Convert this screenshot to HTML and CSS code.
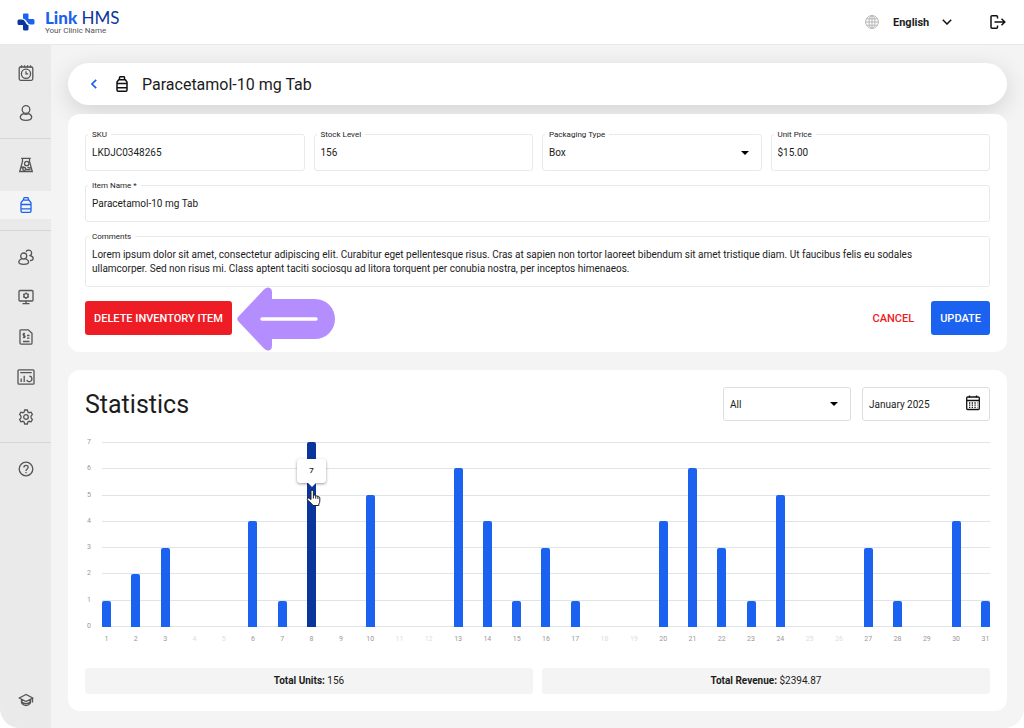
FILE: index.html
```html
<!DOCTYPE html>
<html lang="en">

<head>
    <meta charset="UTF-8">
    <meta name="viewport" content="width=device-width, initial-scale=1.0">
    <title>Link HMS - Inventory Item</title>
    <link rel="stylesheet" href="styles.css">
</head>

<body>
    <div class="app">
        <header class="topbar">
            <a class="logo" href="#">
                <svg width="18" height="18" viewBox="0 0 18 18">
                    <path fill="#1b62f0" d="M6 1.500Q6 .5 7 .5h3.500q1 0 1 1V6H16q1.500 0 1.500 1.500V10q0 1.500-1.500 1.500h-2.500Q11.500 11.500 10.500 9.500L9 7.500Q8 6 6 5.500z"/>
                    <path fill="#0a359c" d="M11.500 16q0 1.500-1.500 1.500H7.500Q6 17.500 6 16v-4H2Q.5 12 .5 10.500V8Q.5 6.500 2 6.500h3q2 0 3 2l1.500 2.500q.8 1 2 1.200z"/>
                </svg>
                <span class="logo-text">
                    <span class="logo-name"><b>Link</b> HMS</span>
                    <span class="clinic">Your Clinic Name</span>
                </span>
            </a>
            <div class="topbar-right">
                <svg width="14" height="14" viewBox="0 0 14 14" fill="none" stroke="#b5b5b5">
                    <circle cx="7" cy="7" r="6.400"/>
                    <ellipse cx="7" cy="7" rx="3" ry="6.400"/>
                    <path d="M7 .6v12.800M.6 7h12.800M1.600 3.800h10.800M1.600 10.200h10.800"/>
                </svg>
                <label class="language">
                    <select aria-label="Language">
                        <option>English</option>
                    </select>
                    <svg width="10" height="6" viewBox="0 0 10 6" fill="none" stroke="#111" stroke-width="1.500">
                        <path d="M.8.8 5 5 9.200.8"/>
                    </svg>
                </label>
                <button class="icon-btn" type="button" aria-label="Log out">
                    <svg width="16" height="14" viewBox="0 0 16 14" fill="none" stroke="#111" stroke-width="1.500">
                        <path d="M7.500 3.500V1.800q0-1-1-1H2q-1 0-1 1v10.400q0 1 1 1h4.500q1 0 1-1v-1.700M4.500 7h10M11.500 3.700 14.800 7l-3.300 3.300"/>
                    </svg>
                </button>
            </div>
        </header>

        <div class="layout">
            <nav class="sidebar">
                <div class="nav-group">
                    <a href="#" aria-label="Appointments">
                        <svg width="16" height="16" viewBox="0 0 16 16">
                            <rect x="1.200" y="2" width="13.600" height="13.300" rx="1.500"/>
                            <circle cx="8" cy="8.700" r="4.600"/>
                            <path d="M8 6.200v2.700h2.200M3.500.3v2.200M6.500.3v2.200M9.500.3v2.200M12.500.3v2.200"/>
                        </svg>
                    </a>
                    <a href="#" aria-label="Patients">
                        <svg width="16" height="16" viewBox="0 0 16 16">
                            <circle cx="8" cy="4.500" r="3.800"/>
                            <path d="M5.500 8.700C3.500 9.500 2.300 10.800 2.300 12.300c0 2 2.500 3 5.700 3s5.700-1 5.700-3c0-1.500-1.200-2.800-3.200-3.600-1.500.8-3.500.8-5 0z"/>
                        </svg>
                    </a>
                </div>
                <div class="nav-group">
                    <a href="#" aria-label="Laboratory">
                        <svg width="16" height="16" viewBox="0 0 16 16">
                            <path d="M3.200 1.300h9.600M4.500 1.300v3.200L1.700 14.500h12.600L11.500 4.500V1.300M3 11c1.500-1.500 2.500-1.200 3.500-.3M9.500 10c1.500 1 2.500 1.300 3.700.5M8 12.500h4.500"/>
                            <circle cx="8.700" cy="6.500" r="2.200"/>
                            <circle cx="6.200" cy="12" r="1.500"/>
                        </svg>
                    </a>
                    <a class="active" href="#" aria-label="Inventory">
                        <svg width="16" height="16" viewBox="0 0 16 16">
                            <path d="M5.700 3.200v-1.700q0-.8.8-.8h3q.8 0 .8.800v1.700M5 3.200h6l2 2.600v8.200q0 1.300-1.300 1.300H4.300Q3 15.300 3 14V5.800zM3 7.500h10M3 11.800h10"/>
                        </svg>
                    </a>
                </div>
                <div class="nav-group">
                    <a href="#" aria-label="Staff">
                        <svg width="16" height="16" viewBox="0 0 16 16">
                            <circle cx="5.700" cy="7" r="3"/>
                            <path d="M3.700 10C2 10.500.8 11.700.8 13c0 1.500 2 2.300 4.900 2.300s4.900-.8 4.900-2.300c0-1.300-1.200-2.500-2.900-3M8 2.600a3 3 0 1 1 4.200 4c1.800.5 3 1.600 3 2.900 0 1.200-1.200 2-3.200 2.200"/>
                        </svg>
                    </a>
                    <a href="#" aria-label="System">
                        <svg width="16" height="16" viewBox="0 0 16 16">
                            <rect x="1" y="1.500" width="14" height="10.500" rx="1"/>
                            <circle cx="8" cy="6.700" r="2.100"/>
                            <path d="M8 12v2.700M4.500 14.700h7M8 3.500v1.200M8 8.800v1.200M5.200 5.100l1 .6M9.800 7.700l1 .6M5.200 8.300l1-.6M9.800 5.700l1-.6"/>
                        </svg>
                    </a>
                    <a href="#" aria-label="Billing">
                        <svg width="16" height="16" viewBox="0 0 16 16">
                            <path d="M3.300.8h7L14 4.300v9.700q0 1.200-1.200 1.200H3.200Q2 15.200 2 14V2Q2 .8 3.300.8zM5 12.500h6.500M9 6.500h2.500M9 9.200h2.500M7 4.800c-2-.8-2.500 1.300-1 1.700 1.700.5 1.200 2.700-1 1.800M6 3.800v5.500"/>
                        </svg>
                    </a>
                    <a href="#" aria-label="Reports">
                        <svg width="18" height="16" viewBox="0 0 18 16">
                            <rect x="1" y=".8" width="16" height="14.400" rx="1"/>
                            <path d="M3.300 3.700h11.400M4.200 13V9.500M7.200 13V6.800M12.300 7.200a2.700 2.700 0 1 1-2.600 3.700"/>
                        </svg>
                    </a>
                    <a href="#" aria-label="Settings">
                        <svg width="16" height="16" viewBox="0 0 16 16">
                            <path d="M6.700 1h2.600l.6 2 1.200.7 2-.5 1.300 2.300L13 7.200v1.600l1.400 1.700-1.300 2.300-2-.5-1.200.7-.6 2H6.700l-.6-2-1.200-.7-2 .5-1.300-2.300L3 8.800V7.200L1.600 5.500l1.300-2.300 2 .5L6.100 3z"/>
                            <circle cx="8" cy="8" r="2.300"/>
                        </svg>
                    </a>
                </div>
                <div class="nav-group">
                    <a href="#" aria-label="Help">
                        <svg width="16" height="16" viewBox="0 0 16 16">
                            <circle cx="8" cy="8" r="6.800"/>
                            <path d="M5.900 6.500c0-2.900 4.300-2.800 4.300-.2C10.200 8 8 8 8 9.900M8 11v1.300"/>
                        </svg>
                    </a>
                </div>
                <div class="nav-group nav-bottom">
                    <a href="#" aria-label="Training">
                        <svg width="16" height="16" viewBox="0 0 16 16">
                            <path d="M8 2.500 1.300 6 8 9.500 14.700 6zM3.500 7.500v3.300c2 3.600 7 3.600 9 0V7.500M14.500 6.200v4.300M3.500 9.300c2 3 7 3 9 0"/>
                        </svg>
                    </a>
                </div>
            </nav>

            <main>
                <div class="title-bar">
                    <a class="back" href="#" aria-label="Back">
                        <svg width="6" height="10" viewBox="0 0 6 10" fill="none" stroke="#1b62f0" stroke-width="1.700">
                            <path d="M5.200.8 1 5l4.200 4.200"/>
                        </svg>
                    </a>
                    <svg width="12" height="16" viewBox="0 0 12 16" fill="none" stroke="#111" stroke-width="1.500">
                        <path d="M3.500 3.500v-2q0-.7.7-.7h3.600q.7 0 .7.700v2M2.700 3.700h6.600L11 6v8q0 1.200-1.200 1.200H2.200Q1 15.200 1 14V6zM1 7.500h10M1 11.700h10"/>
                    </svg>
                    <h1>Paracetamol-10 mg Tab</h1>
                </div>

                <form class="card item-form">
                    <div class="row">
                        <div class="field">
                            <label for="sku">SKU</label>
                            <input type="text" id="sku" value="LKDJC0348265">
                        </div>
                        <div class="field">
                            <label for="stock">Stock Level</label>
                            <input type="text" id="stock" value="156">
                        </div>
                        <div class="field">
                            <label for="packaging">Packaging Type</label>
                            <select id="packaging">
                                <option>Box</option>
                            </select>
                            <span class="caret"></span>
                        </div>
                        <div class="field">
                            <label for="price">Unit Price</label>
                            <input type="text" id="price" value="$15.00">
                        </div>
                    </div>
                    <div class="field">
                        <label for="itemName">Item Name *</label>
                        <input type="text" id="itemName" value="Paracetamol-10 mg Tab">
                    </div>
                    <div class="field">
                        <label for="comments">Comments</label>
                        <textarea id="comments" spellcheck="false">Lorem ipsum dolor sit amet, consectetur adipiscing elit. Curabitur eget pellentesque risus. Cras at sapien non tortor laoreet bibendum sit amet tristique diam. Ut faucibus felis eu sodales
ullamcorper. Sed non risus mi. Class aptent taciti sociosqu ad litora torquent per conubia nostra, per inceptos himenaeos.</textarea>
                    </div>
                    <div class="actions">
                        <div class="delete-wrap">
                            <button class="btn btn-delete" type="button">DELETE INVENTORY ITEM</button>
                            <svg class="pointer" width="98" height="64" viewBox="0 0 98 64">
                                <path fill="#b48eff" d="M1.500 29.500 27 2.500Q30-.5 33 1q2 1 2 4v7h43a20 20 0 0 1 0 40H35v7q0 3-2 4-3 1.500-6-1.500L1.500 34.500q-2.500-2.500 0-5z"/>
                                <path stroke="#fff" stroke-width="3.500" stroke-linecap="round" d="M25 32h54"/>
                            </svg>
                        </div>
                        <div class="actions-right">
                            <button class="btn btn-cancel" type="button">CANCEL</button>
                            <button class="btn btn-update" type="button">UPDATE</button>
                        </div>
                    </div>
                </form>

                <section class="card stats">
                    <div class="stats-head">
                        <h2>Statistics</h2>
                        <div class="filters">
                            <div class="field">
                                <select aria-label="Filter">
                                    <option>All</option>
                                </select>
                                <span class="caret"></span>
                            </div>
                            <div class="field">
                                <input type="text" aria-label="Month" value="January 2025">
                                <svg class="calendar" width="14" height="16" viewBox="0 0 14 16" fill="none" stroke="#111">
                                    <rect x=".7" y="2" width="12.600" height="12.500" rx="1" stroke-width="1.300"/>
                                    <path stroke-width="1.300" d="M3.500.5v2M10.500.5v2M1 5.500h12"/>
                                    <path stroke-width="1.300" stroke-dasharray="1.300 1.400" d="M3 8h8.500M3 10.200h8.500M3 12.400h8.500"/>
                                </svg>
                            </div>
                        </div>
                    </div>

                    <div class="chart">
                        <div class="y-axis" id="yAxis"></div>
                        <div class="plot">
                            <div class="grid-lines" id="gridLines"></div>
                            <div class="bars" id="bars"></div>
                        </div>
                        <div class="x-axis" id="xAxis"></div>
                    </div>

                    <div class="totals">
                        <p><b>Total Units:</b> 156</p>
                        <p><b>Total Revenue:</b> $2394.87</p>
                    </div>
                </section>
            </main>
        </div>
    </div>

    <script src="script.js"></script>
</body>

</html>
```

FILE: styles.css
```css
* {
    box-sizing: border-box;
}

body {
    margin: 0;
    background-color: #fff;
    color: #1c1c1c;
    font-family: Roboto, "Liberation Sans", sans-serif;
    font-size: 10px;
}

h1, h2, p {
    margin: 0;
    font-weight: 400;
}

svg {
    display: block;
    flex-shrink: 0;
}

button, input, select, textarea {
    font: inherit;
    color: inherit;
}

.app {
    display: flex;
    flex-direction: column;
    min-height: 100vh;
    background-color: #f4f4f4;
    border-radius: 20px;
    overflow: hidden;
}

/* top bar */
.topbar {
    display: flex;
    justify-content: space-between;
    align-items: center;
    height: 45px;
    padding: 0 18px 0 17px;
    background-color: #fff;
    border-bottom: 1px solid #e8e8e8;
}

.logo {
    display: flex;
    align-items: center;
    gap: 10px;
    color: #0a359c;
    text-decoration: none;
}

.logo-text {
    display: flex;
    flex-direction: column;
}

.logo-name {
    font-family: Lato, sans-serif;
    font-size: 17px;
    line-height: 18px;
}

.logo-name b {
    color: #1b62f0;
    font-weight: 900;
}

.clinic {
    color: #555;
    font-size: 8px;
    line-height: 8px;
}

.topbar-right {
    display: flex;
    align-items: center;
    gap: 14px;
}

.language {
    display: flex;
    align-items: center;
}

.language select {
    width: 49px;
    padding: 0;
    border: 0;
    background: none;
    appearance: none;
    font-size: 11px;
    font-weight: 700;
}

.icon-btn {
    padding: 0;
    margin-left: 24px;
    border: 0;
    background: none;
}

/* sidebar */
.layout {
    display: flex;
    flex: 1;
}

.sidebar {
    display: flex;
    flex-direction: column;
    width: 51px;
    flex-shrink: 0;
    padding-top: 2px;
    background-color: #eaeaea;
}

.nav-group {
    display: flex;
    flex-direction: column;
    gap: 12px;
    padding: 12px 0 11px;
}

.nav-group + .nav-group {
    border-top: 1px solid #d6d6d6;
}

.nav-group a {
    display: flex;
    justify-content: center;
    align-items: center;
    height: 28px;
}

.nav-group svg {
    fill: none;
    stroke: #555;
    stroke-width: 1.3;
}

.nav-group .active {
    background-color: #f4f4f4;
}

.nav-group .active svg {
    stroke: #1b62f0;
}

.nav-group.nav-bottom {
    margin-top: auto;
    padding-bottom: 14px;
    border-top: 0;
}

/* content */
main {
    display: flex;
    flex-direction: column;
    flex: 1;
    min-width: 0;
    padding: 18px 17px 17px;
}

.title-bar {
    display: flex;
    align-items: center;
    height: 42px;
    margin-bottom: 9px;
    padding: 0 20px;
    background-color: #fff;
    border-radius: 21px;
    box-shadow: 0 6px 24px rgba(0, 0, 0, 0.14);
}

.title-bar h1 {
    margin-left: 14px;
    font-size: 16px;
}

.back {
    padding: 3px;
    margin-right: 16px;
}

.card {
    position: relative;
    padding: 17px;
    background-color: #fff;
    border-radius: 12px;
}

.item-form {
    display: flex;
    flex-direction: column;
    gap: 14px;
    margin-bottom: 18px;
    padding-top: 20px;
}

.row {
    display: grid;
    grid-template-columns: repeat(4, 1fr);
    gap: 9px;
}

.field {
    position: relative;
}

.field label {
    position: absolute;
    top: -4px;
    left: 3px;
    padding: 0 4px;
    background-color: #fff;
    font-size: 8px;
    line-height: 10px;
}

.field input,
.field select,
.field textarea {
    display: block;
    width: 100%;
    height: 37px;
    padding: 0 6px;
    border: 1px solid #e9e9e9;
    border-radius: 3px;
    background-color: #fff;
    appearance: none;
}

.field textarea {
    height: 51px;
    padding: 11px 6px;
    line-height: 14px;
    resize: none;
}

.caret {
    position: absolute;
    top: calc(50% - 2px);
    right: 13px;
    border: 4px solid transparent;
    border-top-color: #000;
    border-bottom: 0;
}

.actions,
.actions-right {
    display: flex;
    justify-content: space-between;
}

.actions-right {
    gap: 8px;
}

.delete-wrap {
    position: relative;
}

.btn {
    height: 34px;
    padding: 0 9px;
    border: 0;
    border-radius: 3px;
    color: #fff;
    font-size: 11px;
    font-weight: 500;
}

.btn-delete {
    background-color: #ee1c25;
}

.btn-cancel {
    background-color: #fff;
    color: #ee1c25;
}

.btn-update {
    background-color: #1b62f0;
}

.pointer {
    position: absolute;
    top: -14px;
    left: calc(100% + 5px);
}

/* statistics */
.stats-head {
    display: flex;
    justify-content: space-between;
    align-items: center;
}

.stats-head h2 {
    font-size: 25px;
}

.filters {
    display: flex;
    gap: 11px;
}

.filters .field {
    width: 128px;
}

.filters .field input,
.filters .field select {
    height: 34px;
    border-color: #dedede;
}

.calendar {
    position: absolute;
    top: 8px;
    right: 10px;
}

.chart {
    display: grid;
    grid-template-columns: 17px 1fr;
    row-gap: 7px;
    margin-top: 21px;
    color: #999;
    font-size: 7px;
}

.y-axis,
.grid-lines {
    display: flex;
    flex-direction: column;
    justify-content: space-between;
}

.y-axis span {
    height: 1px;
    padding-left: 2px;
    line-height: 1px;
}

.plot {
    display: grid;
    height: 185px;
}

.grid-lines,
.bars {
    grid-area: 1 / 1;
}

.grid-lines span {
    height: 1px;
    background-color: #dfe4e8;
}

.bars,
.x-axis {
    display: flex;
    justify-content: space-between;
    align-items: flex-end;
}

.bar {
    position: relative;
    width: 9px;
    border-radius: 2px 2px 0 0;
    background-color: #1b62f0;
}

.bar.hovered {
    background-color: #0a359c;
}

.x-axis {
    grid-column: 2;
}

.x-axis span {
    display: flex;
    justify-content: center;
    width: 9px;
    line-height: 10px;
}

.x-axis .off {
    color: #ddd;
}

.tooltip {
    position: absolute;
    top: 17px;
    left: -10px;
    width: 29px;
    border-radius: 3px;
    background-color: #fff;
    box-shadow: 0 1px 3px rgba(0, 0, 0, 0.4);
    color: #1c1c1c;
    font-size: 8px;
    font-weight: 500;
    line-height: 24px;
    text-align: center;
}

.tooltip::after {
    content: "";
    position: absolute;
    top: 100%;
    left: calc(50% - 4px);
    border: 4px solid transparent;
    border-top-color: #fff;
    border-bottom: 0;
}

.cursor {
    position: absolute;
    top: 47px;
    left: -1px;
}

.totals {
    display: flex;
    gap: 9px;
    margin-top: 24px;
}

.totals p {
    flex: 1;
    border-radius: 3px;
    background-color: #f4f4f4;
    line-height: 26px;
    text-align: center;
}
```

FILE: script.js
```js
// Units sold for each day of the month
const units = [1, 2, 3, 0, 0, 4, 1, 7, 0, 5, 0, 0, 6, 4, 1, 3, 1, 0, 0, 4, 6, 3, 1, 5, 0, 0, 3, 1, 0, 4, 1];
const weekend = [4, 5, 11, 12, 18, 19, 25, 26];
const hoveredDay = 8;
const maxUnits = 7;

const yAxis = document.getElementById("yAxis");
const gridLines = document.getElementById("gridLines");
const bars = document.getElementById("bars");
const xAxis = document.getElementById("xAxis");

for (let i = maxUnits; i >= 0; i--) {
    yAxis.innerHTML += `<span>${i}</span>`;
    gridLines.innerHTML += "<span></span>";
}

units.forEach((count, index) => {
    const day = index + 1;
    const bar = document.createElement("div");
    bar.className = "bar";
    bar.style.height = (count / maxUnits) * 100 + "%";

    // Tooltip with the value for the hovered day
    if (day === hoveredDay) {
        bar.classList.add("hovered");
        bar.innerHTML = `
            <div class="tooltip">${count}</div>
            <svg class="cursor" width="15" height="18" viewBox="0 0 15 18">
                <path fill="#fff" stroke="#222" stroke-linejoin="round" d="M5 10.500V2.500q0-1.300 1.200-1.300t1.200 1.300V7q.2-1 1.200-.9T9.700 7.500q.3-.8 1.200-.7t1 1.200q.4-.5 1.100-.3.800.2.800 1.200v3.100q0 1.800-1 3v1.500H7l-1.500-2L1.300 10.800Q.8 9.700 1.800 9.200q.8-.3 1.500.3z"/>
                <path fill="none" stroke="#222" d="M7.400 7v2.500M9.700 7.500v2.200M11.900 8v1.900"/>
            </svg>`;
    }
    bars.appendChild(bar);

    const label = document.createElement("span");
    label.textContent = day;
    if (weekend.includes(day)) {
        label.className = "off";
    }
    xAxis.appendChild(label);
});
```
